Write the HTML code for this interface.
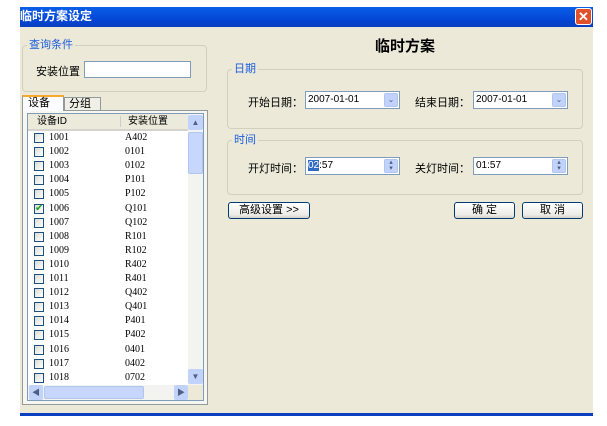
<!DOCTYPE html><html><head><meta charset="utf-8"><style>
*{margin:0;padding:0;box-sizing:border-box}
body{width:607px;height:426px;background:#fff;position:relative;overflow:hidden;font-family:"Liberation Sans","Noto Sans CJK SC",sans-serif;font-size:12px;color:#000}
.a{position:absolute}
.grp{position:absolute;border:1px solid #d0d0bf;border-radius:4px}
.gl{position:absolute;background:#ECE9D8;color:#1b5ee0;font-size:11px;padding:0 2px;top:-8px;left:4px;line-height:14px}
.inp{position:absolute;background:#fff;border:1px solid #7f9db9;font-size:10px;font-family:"Liberation Sans",sans-serif;line-height:16px;padding-left:2px}
.dd{position:absolute;right:1px;top:1px;width:14px;height:14px;background:#c1d3fb;border:1px solid #b2c5ef;border-radius:2px;color:#4d6185;font-size:8px;text-align:center;line-height:11px}
.btn{position:absolute;border:1px solid #003c74;border-radius:3px;background:linear-gradient(#fff,#ecebe6 80%,#d6d0c5);font-size:11px;text-align:center;line-height:15px}
.row{position:absolute;left:7px;height:14px;font-family:"Liberation Serif",serif;font-size:10px;line-height:14px}
.cb{position:absolute;left:0;top:2px;width:10px;height:10px;border:1px solid #1c5180;background:linear-gradient(135deg,#dcdcd5,#fff)}
.lab{position:absolute;font-size:11px}
</style></head><body>
<div class="a" style="left:20px;top:7px;width:573px;height:20px;background:linear-gradient(#0a5ee8,#0347d6 60%,#0a3fc0)"></div>
<div class="a" style="left:20px;top:8px;color:#fff;font-weight:bold;font-size:12px;line-height:16px">临时方案设定</div>
<div class="a" style="left:575px;top:8px;width:17px;height:17px;background:#e0502a;border:1px solid #fff;border-radius:3px;color:#fff;font-size:13px;font-weight:bold;text-align:center;line-height:15px">✕</div>
<div class="a" style="left:20px;top:27px;width:573px;height:386px;background:#ECE9D8"></div>
<div class="a" style="left:20px;top:413px;width:573px;height:3px;background:#0a3fc0"></div>

<div class="grp" style="left:22px;top:45px;width:185px;height:47px"><div class="gl">查询条件</div></div>
<div class="lab" style="left:36px;top:63px">安装位置</div>
<div class="inp" style="left:84px;top:61px;width:107px;height:17px"></div>

<div class="a" style="left:22px;top:110px;width:186px;height:295px;border:1px solid #919b9c;background:#f7f6f0"></div>
<div class="a" style="left:22px;top:95px;width:42px;height:16px;background:#fcfcfe;border:1px solid #919b9c;border-bottom:none;border-top:2px solid #f7a82d;font-size:11px;padding-left:5px;line-height:12px">设备</div>
<div class="a" style="left:64px;top:97px;width:37px;height:13px;background:#f0efe7;border:1px solid #919b9c;border-bottom:none;font-size:11px;padding-left:4px;line-height:13px">分组</div>

<div class="a" style="left:27px;top:113px;width:177px;height:288px;border:1px solid #7f9db9;background:#fff;overflow:hidden">
<div class="a" style="left:0;top:0;width:160px;height:17px;background:#ebeadb;border-bottom:2px solid #d6d3ce;font-size:10px;line-height:15px"><span class="a" style="left:9px">设备ID</span><span class="a" style="left:92px;top:2px;height:11px;border-left:1px solid #ccc"></span><span class="a" style="left:100px">安装位置</span></div>
<div class="a" style="left:160px;top:0;width:15px;height:271px;background:#f3f3ef"></div>
<div class="a" style="left:160px;top:1px;width:15px;height:15px;background:#c1d3fb;border-radius:2px;color:#4d6185;font-size:8px;text-align:center;line-height:15px">▲</div>
<div class="a" style="left:160px;top:18px;width:15px;height:42px;background:#c6d6fc;border:1px solid #b2c5ef;border-radius:2px"></div>
<div class="a" style="left:160px;top:255px;width:15px;height:15px;background:#c1d3fb;border-radius:2px;color:#4d6185;font-size:8px;text-align:center;line-height:15px">▼</div>
<div class="a" style="left:0;top:271px;width:160px;height:15px;background:#f3f3ef"></div>
<div class="a" style="left:1px;top:271px;width:14px;height:15px;background:#c1d3fb;border-radius:2px;color:#4d6185;font-size:8px;text-align:center;line-height:15px">◀</div>
<div class="a" style="left:16px;top:272px;width:100px;height:13px;background:#c6d6fc;border:1px solid #b2c5ef;border-radius:2px"></div>
<div class="a" style="left:146px;top:271px;width:14px;height:15px;background:#c1d3fb;border-radius:2px;color:#4d6185;font-size:8px;text-align:center;line-height:15px">▶</div>
<div class="a" style="left:160px;top:271px;width:15px;height:15px;background:#ece9d8"></div>
</div>
<div class="a" style="left:27px;top:131px;width:160px;height:253px;overflow:hidden">
<div class="row" style="top:0"><span class="cb"></span><span class="a" style="left:15px">1001</span><span class="a" style="left:91px">A402</span></div>
<div class="row" style="top:14.1px"><span class="cb"></span><span class="a" style="left:15px">1002</span><span class="a" style="left:91px">0101</span></div>
<div class="row" style="top:28.2px"><span class="cb"></span><span class="a" style="left:15px">1003</span><span class="a" style="left:91px">0102</span></div>
<div class="row" style="top:42.3px"><span class="cb"></span><span class="a" style="left:15px">1004</span><span class="a" style="left:91px">P101</span></div>
<div class="row" style="top:56.4px"><span class="cb"></span><span class="a" style="left:15px">1005</span><span class="a" style="left:91px">P102</span></div>
<div class="row" style="top:70.5px"><span class="cb" style="color:#21a121;font-size:10px;line-height:8px;text-align:center">✔</span><span class="a" style="left:15px">1006</span><span class="a" style="left:91px">Q101</span></div>
<div class="row" style="top:84.6px"><span class="cb"></span><span class="a" style="left:15px">1007</span><span class="a" style="left:91px">Q102</span></div>
<div class="row" style="top:98.7px"><span class="cb"></span><span class="a" style="left:15px">1008</span><span class="a" style="left:91px">R101</span></div>
<div class="row" style="top:112.8px"><span class="cb"></span><span class="a" style="left:15px">1009</span><span class="a" style="left:91px">R102</span></div>
<div class="row" style="top:126.9px"><span class="cb"></span><span class="a" style="left:15px">1010</span><span class="a" style="left:91px">R402</span></div>
<div class="row" style="top:141px"><span class="cb"></span><span class="a" style="left:15px">1011</span><span class="a" style="left:91px">R401</span></div>
<div class="row" style="top:155.1px"><span class="cb"></span><span class="a" style="left:15px">1012</span><span class="a" style="left:91px">Q402</span></div>
<div class="row" style="top:169.2px"><span class="cb"></span><span class="a" style="left:15px">1013</span><span class="a" style="left:91px">Q401</span></div>
<div class="row" style="top:183.3px"><span class="cb"></span><span class="a" style="left:15px">1014</span><span class="a" style="left:91px">P401</span></div>
<div class="row" style="top:197.4px"><span class="cb"></span><span class="a" style="left:15px">1015</span><span class="a" style="left:91px">P402</span></div>
<div class="row" style="top:211.5px"><span class="cb"></span><span class="a" style="left:15px">1016</span><span class="a" style="left:91px">0401</span></div>
<div class="row" style="top:225.6px"><span class="cb"></span><span class="a" style="left:15px">1017</span><span class="a" style="left:91px">0402</span></div>
<div class="row" style="top:239.7px"><span class="cb"></span><span class="a" style="left:15px">1018</span><span class="a" style="left:91px">0702</span></div>
</div>

<div class="a" style="left:340px;top:37px;width:130px;text-align:center;font-weight:bold;font-size:15px;line-height:20px">临时方案</div>
<div class="grp" style="left:227px;top:69px;width:356px;height:60px"><div class="gl" style="left:4px">日期</div></div>
<div class="lab" style="left:248px;top:94px">开始日期：</div>
<div class="inp" style="left:305px;top:91px;width:95px;height:18px">2007-01-01<div class="dd">⌄</div></div>
<div class="lab" style="left:415px;top:94px">结束日期：</div>
<div class="inp" style="left:473px;top:91px;width:95px;height:18px">2007-01-01<div class="dd">⌄</div></div>

<div class="grp" style="left:227px;top:140px;width:356px;height:55px"><div class="gl" style="left:4px">时间</div></div>
<div class="lab" style="left:248px;top:160px">开灯时间：</div>
<div class="inp" style="left:305px;top:157px;width:95px;height:18px"><span style="background:#316ac5;color:#fff">02</span>:57<div class="dd" style="line-height:6px;font-size:7px">▴<br>▾</div></div>
<div class="lab" style="left:415px;top:160px">关灯时间：</div>
<div class="inp" style="left:473px;top:157px;width:95px;height:18px">01:57<div class="dd" style="line-height:6px;font-size:7px">▴<br>▾</div></div>

<div class="btn" style="left:228px;top:202px;width:82px;height:17px">高级设置 &gt;&gt;</div>
<div class="btn" style="left:454px;top:202px;width:61px;height:17px">确 定</div>
<div class="btn" style="left:522px;top:202px;width:61px;height:17px">取 消</div>
</body></html>
